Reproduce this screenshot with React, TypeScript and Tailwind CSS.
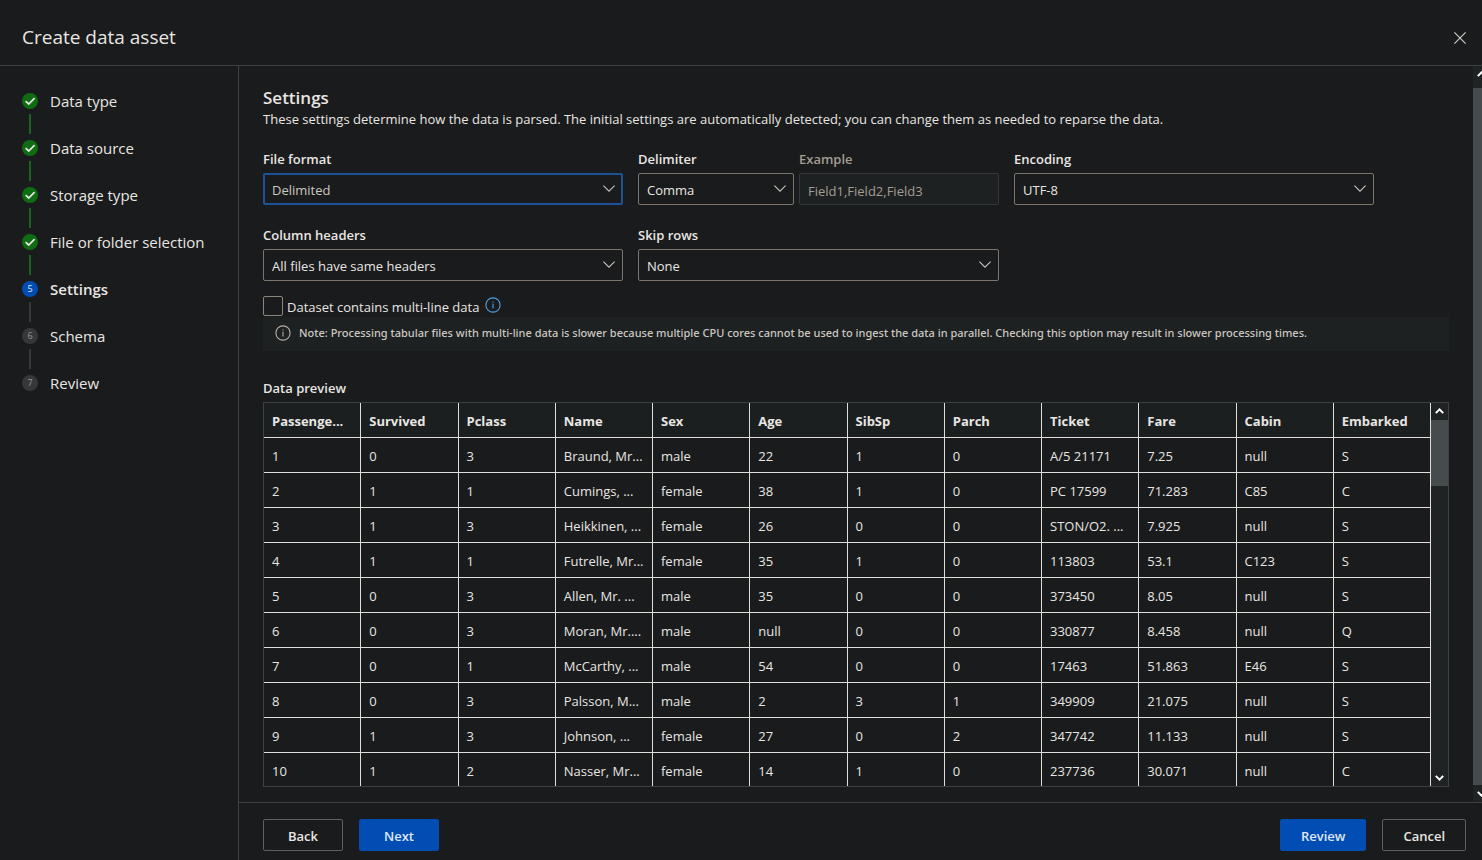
import { useId } from "react";
import type { ReactNode } from "react";

type StepState = "done" | "current" | "todo";

const steps: { label: string; state: StepState }[] = [
  { label: "Data type", state: "done" },
  { label: "Data source", state: "done" },
  { label: "Storage type", state: "done" },
  { label: "File or folder selection", state: "done" },
  { label: "Settings", state: "current" },
  { label: "Schema", state: "todo" },
  { label: "Review", state: "todo" },
];

const columns = [
  "Passenge...", "Survived", "Pclass", "Name", "Sex", "Age",
  "SibSp", "Parch", "Ticket", "Fare", "Cabin", "Embarked",
];

const rows = [
  ["1", "0", "3", "Braund, Mr...", "male", "22", "1", "0", "A/5 21171", "7.25", "null", "S"],
  ["2", "1", "1", "Cumings, ...", "female", "38", "1", "0", "PC 17599", "71.283", "C85", "C"],
  ["3", "1", "3", "Heikkinen, ...", "female", "26", "0", "0", "STON/O2. ...", "7.925", "null", "S"],
  ["4", "1", "1", "Futrelle, Mr...", "female", "35", "1", "0", "113803", "53.1", "C123", "S"],
  ["5", "0", "3", "Allen, Mr. ...", "male", "35", "0", "0", "373450", "8.05", "null", "S"],
  ["6", "0", "3", "Moran, Mr....", "male", "null", "0", "0", "330877", "8.458", "null", "Q"],
  ["7", "0", "1", "McCarthy, ...", "male", "54", "0", "0", "17463", "51.863", "E46", "S"],
  ["8", "0", "3", "Palsson, M...", "male", "2", "3", "1", "349909", "21.075", "null", "S"],
  ["9", "1", "3", "Johnson, ...", "female", "27", "0", "2", "347742", "11.133", "null", "S"],
  ["10", "1", "2", "Nasser, Mr...", "female", "14", "1", "0", "237736", "30.071", "null", "C"],
];

function StepBadge({ state, index }: { state: StepState; index: number }) {
  if (state === "done") {
    return (
      <span className="flex size-4 shrink-0 items-center justify-center rounded-full bg-[#0f6c12]">
        <svg viewBox="0 0 16 16" className="size-4" fill="none" stroke="#e8e6e3" strokeWidth="1.7">
          <path d="M3.6 8.2 6.7 11 12.6 5.2" />
        </svg>
      </span>
    );
  }
  const tone = state === "current" ? "bg-[#024db4] text-[#e8e6e3]" : "bg-[#35383b] text-[#9a948b]";
  return (
    <span className={`flex size-4 shrink-0 items-center justify-center rounded-full text-[9px] leading-4 ${tone}`}>
      {index}
    </span>
  );
}

function Stepper() {
  return (
    <nav aria-label="Steps" className="w-[239px] shrink-0 border-r border-[#3e4143] px-[22px] pt-[25px]">
      <ol>
        {steps.map((step, i) => (
          <li key={step.label}>
            <div className="flex h-5 items-center gap-3">
              <StepBadge state={step.state} index={i + 1} />
              <span className={`whitespace-nowrap text-[15px] leading-5 ${step.state === "current" ? "font-semibold" : ""}`}>
                {step.label}
              </span>
            </div>
            {i < steps.length - 1 && (
              <div className={`mt-[3px] mb-1 ml-[7px] h-5 w-0.5 ${step.state === "done" ? "bg-[#1a6420]" : "bg-[#35383b]"}`} />
            )}
          </li>
        ))}
      </ol>
    </nav>
  );
}

function SelectField({ label, value, width, focused = false }: { label: string; value: string; width: string; focused?: boolean }) {
  const id = useId();
  return (
    <div className={width}>
      <label htmlFor={id} className="mb-1 block text-[13px] leading-5 font-semibold">{label}</label>
      <div className="relative">
        <select
          id={id}
          defaultValue={value}
          className={`block h-8 w-full appearance-none rounded-xs bg-[#1a1b1c] pt-[3px] pr-8 text-[13px] outline-none ${
            focused ? "border-2 border-[#1d5296] pl-[7px] text-[#cbc7c1]" : "border border-[#7b756c] pl-2"
          }`}
        >
          <option>{value}</option>
        </select>
        <svg viewBox="0 0 12 7" className="pointer-events-none absolute top-3 right-2 h-[7px] w-3" fill="none" stroke="#c8c4bd" strokeWidth="1.1">
          <path d="M.4.6 6 6.2 11.6.6" />
        </svg>
      </div>
    </div>
  );
}

function InfoIcon({ className }: { className: string }) {
  return (
    <svg viewBox="0 0 16 16" className={`size-4 shrink-0 ${className}`} fill="none" stroke="currentColor">
      <circle cx="8" cy="8" r="7.1" strokeWidth="1.1" />
      <path d="M8 6.8V11.6" strokeWidth="1.1" />
      <path d="M8 4.4V5.6" strokeWidth="1.2" />
    </svg>
  );
}

function Arrow({ down = false }: { down?: boolean }) {
  return (
    <svg viewBox="0 0 9 6" className="h-1.5 w-[9px] shrink-0" fill="none" stroke="#fff" strokeWidth="2">
      <path d={down ? "M.8.9 4.5 4.6 8.2.9" : "M.8 5.1 4.5 1.4 8.2 5.1"} />
    </svg>
  );
}

function PreviewTable() {
  return (
    <div className="mt-1 flex h-[385px] overflow-hidden border border-[#3e4143]">
      <div className="min-w-0 flex-1 overflow-hidden">
        <table aria-labelledby="preview-title" className="w-full table-fixed border-separate border-spacing-0 text-[13px]">
          <thead className="bg-[#1c1f20]">
            <tr>
              {columns.map((name) => (
                <th key={name} scope="col" className="h-[35px] overflow-hidden border-r border-b border-[#e0dedb] px-2 pt-1 text-left font-bold whitespace-nowrap">
                  {name}
                </th>
              ))}
            </tr>
          </thead>
          <tbody>
            {rows.map((row) => (
              <tr key={row[0]}>
                {row.map((cell, i) => (
                  <td key={columns[i]} className="h-[35px] overflow-hidden border-r border-b border-[#e0dedb] px-2 pt-1 whitespace-nowrap">
                    {cell}
                  </td>
                ))}
              </tr>
            ))}
          </tbody>
        </table>
      </div>
      <div aria-hidden="true" className="flex w-[17px] shrink-0 flex-col items-center bg-[#202324]">
        <span className="flex h-[17px] items-center pb-0.5"><Arrow /></span>
        <span className="h-[66px] w-full bg-[#464b4d]" />
        <span className="mt-auto flex h-[17px] items-center"><Arrow down /></span>
      </div>
    </div>
  );
}

function Button({ primary = false, children }: { primary?: boolean; children: ReactNode }) {
  return (
    <button
      type="button"
      className={`h-8 min-w-20 rounded-xs border px-5 pt-[3px] text-[13px] font-semibold ${
        primary ? "border-[#024db4] bg-[#024db4] text-[#dfe7f2]" : "border-[#5c5f60] bg-transparent"
      }`}
    >
      {children}
    </button>
  );
}

export default function App() {
  const exampleId = useId();
  return (
    <div className="flex min-h-screen flex-col bg-[#1a1b1c] font-['Open_Sans','Noto_Sans',sans-serif] text-[#e8e6e3]">
      <header className="flex h-[66px] items-center justify-between border-b border-[#3e4143] pt-2.5 pr-4 pl-[22px]">
        <h1 className="pb-0.5 text-[19px] leading-7">Create data asset</h1>
        <button type="button" aria-label="Close" className="flex">
          <svg viewBox="0 0 12 12" className="size-3" fill="none" stroke="#d5d2cd" strokeWidth="1.1">
            <path d="M.4.4 11.6 11.6M11.6.4.4 11.6" />
          </svg>
        </button>
      </header>

      <div className="flex flex-1">
        <Stepper />
        <div className="flex min-w-0 flex-1 flex-col">
          <div className="flex flex-1">
            <main className="min-w-0 flex-1 pt-5 pr-6 pb-[15px] pl-6">
              <h2 className="text-[17px] leading-[23px] font-semibold">Settings</h2>
              <p className="text-[13px] leading-5">
                These settings determine how the data is parsed. The initial settings are automatically detected; you can change them as needed to reparse the data.
              </p>

              <form className="mt-5">
                <div className="flex flex-wrap gap-x-[15px] gap-y-5">
                  <SelectField label="File format" value="Delimited" width="w-[360px]" focused />
                  <div className="flex gap-[5px]">
                    <SelectField label="Delimiter" value="Comma" width="w-[156px]" />
                    <div className="w-[200px]">
                      <label htmlFor={exampleId} className="mb-1 block text-[13px] leading-5 font-semibold text-[#a39c92]">Example</label>
                      <input
                        id={exampleId}
                        disabled
                        defaultValue="Field1,Field2,Field3"
                        className="block h-8 w-full rounded-xs border border-[#35393b] bg-[#1e2122] px-2 pt-[3px] text-[13px] text-[#a39c92]"
                      />
                    </div>
                  </div>
                  <SelectField label="Encoding" value="UTF-8" width="w-[360px]" />
                </div>
                <div className="mt-5 flex flex-wrap gap-x-[15px] gap-y-5">
                  <SelectField label="Column headers" value="All files have same headers" width="w-[360px]" />
                  <SelectField label="Skip rows" value="None" width="w-[361px]" />
                </div>
                <div className="mt-[15px] flex h-5 items-center">
                  <input id="multiline" type="checkbox" className="size-5 appearance-none rounded-xs border border-[#8b857b]" />
                  <label htmlFor="multiline" className="pt-0.5 pl-1 text-[13px] leading-5">Dataset contains multi-line data</label>
                  <InfoIcon className="mb-[3px] ml-1.5 text-[#4f9fe0]" />
                </div>
              </form>

              <div role="note" className="mt-px flex h-[34px] items-center gap-2 bg-[#1e2122] px-3 pb-0.5 text-[#cbc7c1]">
                <InfoIcon className="text-[#b5afa6]" />
                <p className="font-['Noto_Sans',sans-serif] text-[11px] leading-4 font-medium">
                  Note: Processing tabular files with multi-line data is slower because multiple CPU cores cannot be used to ingest the data in parallel. Checking this option may result in slower processing times.
                </p>
              </div>

              <h3 id="preview-title" className="mt-[27px] text-[13px] leading-5 font-semibold">Data preview</h3>
              <PreviewTable />
            </main>
            <div aria-hidden="true" className="flex w-[9px] shrink-0 flex-col overflow-hidden bg-[#202324]">
              <span className="flex h-[22px] items-center pb-1.5 pl-1"><Arrow /></span>
              <span className="w-full flex-1 bg-[#464b4d]" />
              <span className="flex h-[17px] items-center pl-1"><Arrow down /></span>
            </div>
          </div>

          <footer className="flex gap-4 border-t border-[#3e4143] pt-4 pr-4 pb-[9px] pl-6">
            <Button>Back</Button>
            <Button primary>Next</Button>
            <span className="flex-1" />
            <Button primary>Review</Button>
            <Button>Cancel</Button>
          </footer>
        </div>
      </div>
    </div>
  );
}
